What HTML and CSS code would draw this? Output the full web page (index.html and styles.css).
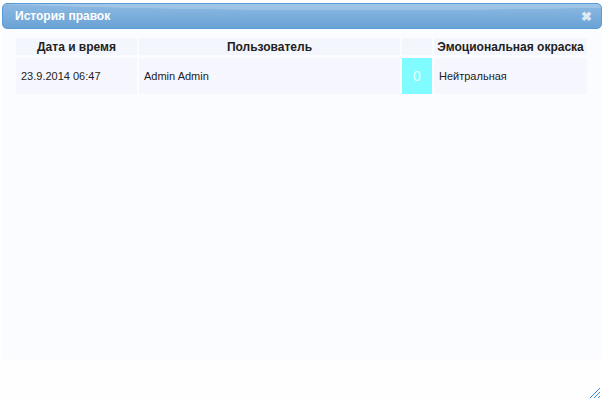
FILE: index.html
```html
<!DOCTYPE html>
<html>
<head>
<meta charset="utf-8">
<link rel="stylesheet" href="styles.css">
</head>
<body>
<div class="dialog">
  <div class="titlebar">
    <span class="title">История правок</span>
    <span class="close">&#x2716;</span>
  </div>
  <div class="content">
    <table class="grid">
      <thead>
        <tr>
          <th class="c-date">Дата и время</th>
          <th class="c-user">Пользователь</th>
          <th class="c-score"></th>
          <th class="c-emo">Эмоциональная окраска</th>
        </tr>
      </thead>
      <tbody>
        <tr>
          <td class="c-date">23.9.2014 06:47</td>
          <td class="c-user">Admin Admin</td>
          <td class="c-score score">0</td>
          <td class="c-emo">Нейтральная</td>
        </tr>
      </tbody>
    </table>
  </div>
  <div class="footer"></div>
  <div class="resize">
    <svg width="12" height="12" viewBox="0 0 12 12">
      <g fill="#3a86e0">
        <rect x="10" y="1" width="1" height="1"/><rect x="9" y="2" width="1" height="1"/><rect x="8" y="3" width="1" height="1"/><rect x="7" y="4" width="1" height="1"/><rect x="6" y="5" width="1" height="1"/><rect x="5" y="6" width="1" height="1"/><rect x="4" y="7" width="1" height="1"/><rect x="3" y="8" width="1" height="1"/><rect x="2" y="9" width="1" height="1"/><rect x="1" y="10" width="1" height="1"/>
        <rect x="10" y="5" width="1" height="1"/><rect x="9" y="6" width="1" height="1"/><rect x="8" y="7" width="1" height="1"/><rect x="7" y="8" width="1" height="1"/><rect x="6" y="9" width="1" height="1"/><rect x="5" y="10" width="1" height="1"/>
        <rect x="10" y="9" width="1" height="1"/><rect x="9" y="10" width="1" height="1"/>
      </g>
    </svg>
  </div>
</div>
</body>
</html>
```
FILE: styles.css
```css
html, body {
  margin: 0;
  padding: 0;
  width: 604px;
  height: 399px;
  overflow: hidden;
  background: #ffffff;
}
.dialog {
  position: relative;
  width: 604px;
  height: 399px;
  box-sizing: border-box;
  padding: 3px 2px 0 2px;
  background: #ffffff;
  font-family: "Liberation Sans", Arial, sans-serif;
  display: flex;
  flex-direction: column;
}
.titlebar {
  height: 26px;
  box-sizing: border-box;
  border: 1px solid #5a9ad6;
  border-radius: 5px;
  background:
    radial-gradient(ellipse 900px 40px at 60% -18px, rgba(255,255,255,0.18) 60%, rgba(255,255,255,0) 61%),
    linear-gradient(#8db9e1, #6aa3d6);
  display: flex;
  align-items: center;
  justify-content: space-between;
  padding: 0 9px 0 12px;
}
.title {
  color: #ffffff;
  font-weight: bold;
  font-size: 12px;
}
.close {
  color: #dfe9f4;
  font-size: 13px;
  font-weight: bold;
  line-height: 1;
}
.content {
  height: 324px;
  background: #fbfcff;
  padding: 6px 15px 0 12px;
}
.footer {
  flex: 1;
  background: #fefeff;
}
.grid {
  border-collapse: separate;
  border-spacing: 2px 3px;
  font-family: "Liberation Sans", Arial, sans-serif;
  font-size: 11px;
  color: #222;
  width: 575px;
}
.grid th {
  background: #f4f6fd;
  font-size: 12px;
  font-weight: bold;
  height: 17px;
  padding: 0 2px;
  color: #222;
  white-space: nowrap;
}
.grid td {
  background: #f6f7fe;
  height: 36px;
  padding: 0 5px;
  white-space: nowrap;
}
.c-date { width: 111px; }
.c-user { width: 251px; }
.c-score { width: 22px; }
.grid td.score {
  background: #80fbff;
  color: #e8ffff;
  font-family: "Liberation Sans", Arial, sans-serif;
  font-size: 14px;
  text-align: center;
  padding: 0 4px;
}
.resize {
  position: absolute;
  right: 3px;
  bottom: 2px;
  width: 12px;
  height: 12px;
}
```
